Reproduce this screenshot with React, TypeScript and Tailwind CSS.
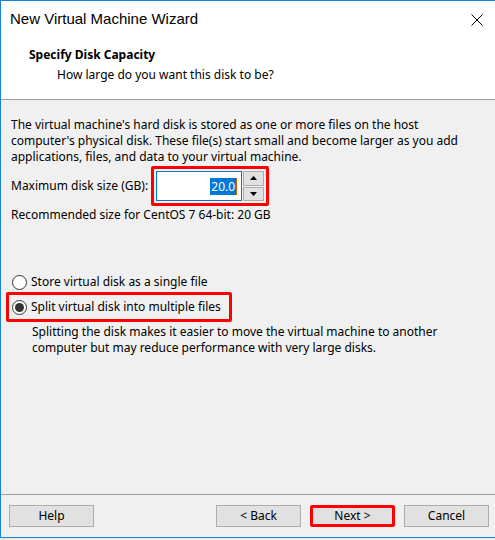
import React from 'react';

// Windows 10 style "New Virtual Machine Wizard" dialog

const font = "font-['Noto_Sans','Liberation_Sans',Arial,sans-serif]";

const WinButton: React.FC<{ label: string; highlight?: boolean }> = ({ label, highlight = false }) => (
  <div
    className={`w-[85px] h-[22px] flex items-center justify-center bg-[#e1e1e1] text-[12px] text-black ${
      highlight ? 'border-[3px] border-[#ff0000] rounded-[2px]' : 'border border-[#adadad]'
    }`}
  >
    {label}
  </div>
);

const Radio: React.FC<{ checked?: boolean }> = ({ checked = false }) => (
  <div className="w-[15px] h-[15px] rounded-full border border-[#333333] bg-white flex items-center justify-center shrink-0">
    {checked && <div className="w-[9px] h-[9px] rounded-full bg-[#333333]" />}
  </div>
);

export default function App() {
  return (
    <div className={`w-[495px] h-[540px] bg-[#eaeaea] ${font}`}>
      <div className="h-[538px] flex flex-col border-l border-t border-b border-[#1883d7] bg-[#f0f0f0]">
        {/* Title bar */}
        <div className="h-[37px] bg-white flex items-center justify-between pl-[9px] pr-[10px]">
          <span className="text-[15px] text-black font-['Liberation_Sans',Arial,sans-serif]">New Virtual Machine Wizard</span>
          <svg width="12" height="12" viewBox="0 0 12 12" className="mr-[2px]">
            <path d="M0.5 0.5 L11.5 11.5 M11.5 0.5 L0.5 11.5" stroke="#000" strokeWidth="1" />
          </svg>
        </div>

        {/* Header */}
        <div className="h-[61px] bg-white pl-[28px] pt-[9px]">
          <div className="text-[12px] font-bold text-black leading-[16px]">Specify Disk Capacity</div>
          <div className="text-[12px] text-black leading-[16px] pl-[28px] mt-[4px]">
            How large do you want this disk to be?
          </div>
        </div>
        <div className="h-px bg-[#a0a0a0]" />

        {/* Body */}
        <div className="flex-1 pt-[17px] pl-[10px] pr-[4px] text-[12px] text-black leading-[16px]">
          <p>
            The virtual machine's hard disk is stored as one or more files on the host
            <br />
            computer's physical disk. These file(s) start small and become larger as you add
            <br />
            applications, files, and data to your virtual machine.
          </p>

          <div className="mt-[1px] flex items-center">
            <span>Maximum disk size (GB):</span>
            <div className="ml-[3px] p-[2px] border-[3px] border-[#ff0000] rounded-[2px] flex items-stretch">
              <div className="w-[86px] h-[30px] bg-white border border-[#0078d7] flex items-center justify-end pr-[4px]">
                <span className="bg-[#0078d7] text-white px-[1px] leading-[17px]">20.0</span>
                <span className="w-px h-[17px] bg-[#c86400]" />
              </div>
              <div className="ml-px flex flex-col gap-px">
                <div className="w-[21px] flex-1 bg-[#e1e1e1] border border-[#adadad] flex items-center justify-center">
                  <svg width="7" height="4" viewBox="0 0 7 4"><path d="M3.5 0 L7 4 L0 4 Z" fill="#000" /></svg>
                </div>
                <div className="w-[21px] flex-1 bg-[#e1e1e1] border border-[#adadad] flex items-center justify-center">
                  <svg width="7" height="4" viewBox="0 0 7 4"><path d="M0 0 L7 0 L3.5 4 Z" fill="#000" /></svg>
                </div>
              </div>
            </div>
          </div>

          <div className="mt-[1px]">Recommended size for CentOS 7 64-bit: 20 GB</div>

          <div className="mt-[51px] h-[16px] flex items-center gap-[4px] pl-[1px]">
            <Radio />
            <span>Store virtual disk as a single file</span>
          </div>

          <div className="mt-[2px] -ml-[5px] w-[226px] h-[30px] border-[3px] border-[#ff0000] rounded-[2px] flex items-center gap-[4px] pl-[3px]">
            <Radio checked />
            <span>Split virtual disk into multiple files</span>
          </div>

          <p className="mt-[2px] pl-[21px]">
            Splitting the disk makes it easier to move the virtual machine to another
            <br />
            computer but may reduce performance with very large disks.
          </p>
        </div>

        {/* Footer */}
        <div className="h-px bg-[#a0a0a0]" />
        <div className="h-[42px] flex items-center pl-[8px] pr-[6px]">
          <WinButton label="Help" />
          <div className="flex-1" />
          <div className="flex items-center gap-[9px]">
            <WinButton label="< Back" />
            <WinButton label="Next >" highlight />
            <WinButton label="Cancel" />
          </div>
        </div>
      </div>
    </div>
  );
}
